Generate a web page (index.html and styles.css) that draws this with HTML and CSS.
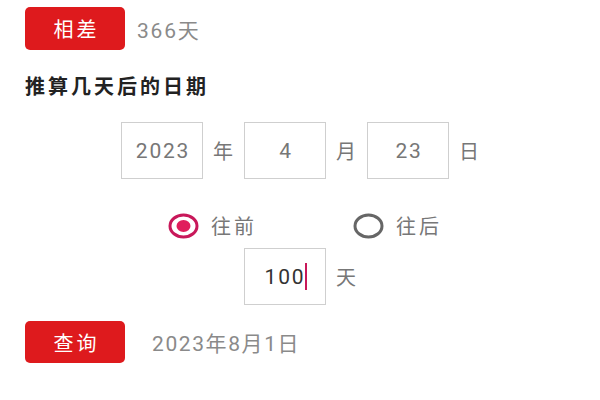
FILE: index.html
```html
<!DOCTYPE html>
<html lang="zh">
<head>
<meta charset="utf-8">
<title>日期计算</title>
<link rel="stylesheet" href="styles.css">
</head>
<body>
<div class="page">
  <div class="result-row top">
    <button class="btn">相差</button>
    <span class="result">366天</span>
  </div>
  <h2 class="heading">推算几天后的日期</h2>
  <div class="date-row">
    <div class="box">2023</div><span class="unit">年</span>
    <div class="box">4</div><span class="unit">月</span>
    <div class="box">23</div><span class="unit">日</span>
  </div>
  <div class="radio-row">
    <label class="radio">
      <svg class="radio-icon" viewBox="0 0 31 26" preserveAspectRatio="none" width="31" height="26">
        <ellipse cx="15.5" cy="13" rx="13.5" ry="11" fill="none" stroke="#c8185a" stroke-width="3"/>
        <ellipse cx="15.5" cy="13" rx="7" ry="6" fill="#e01d5c"/>
      </svg>
      <span>往前</span>
    </label>
    <label class="radio">
      <svg class="radio-icon" viewBox="0 0 31 26" preserveAspectRatio="none" width="31" height="26">
        <ellipse cx="15.5" cy="13" rx="13.5" ry="11" fill="none" stroke="#666" stroke-width="3"/>
      </svg>
      <span>往后</span>
    </label>
  </div>
  <div class="days-row">
    <div class="box days">100<span class="caret"></span></div><span class="unit">天</span>
  </div>
  <div class="result-row bottom">
    <button class="btn">查询</button>
    <span class="result">2023年8月1日</span>
  </div>
</div>
</body>
</html>
```

FILE: styles.css
```css
* { box-sizing: border-box; }
html, body {
  margin: 0;
  padding: 0;
  background: #fff;
}
body {
  font-family: "Roboto", "Noto Sans CJK SC", sans-serif;
  width: 600px;
  height: 400px;
  overflow: hidden;
}
.page {
  padding: 7px 0 0 25px;
  display: flex;
  flex-direction: column;
}
.result-row {
  display: flex;
  align-items: center;
}
.btn {
  width: 100px;
  height: 43px;
  border: none;
  border-radius: 5px;
  background: #de1a1d;
  color: #fff;
  font-family: inherit;
  font-size: 20px;
  letter-spacing: 3px;
  padding: 0 0 0 3px;
}
.result {
  color: #8a8a8a;
  font-size: 21px;
  letter-spacing: 1.8px;
}
.top .result { margin-left: 12px; }
.bottom { margin-top: 16px; }
.bottom .btn { height: 42px; }
.bottom .result { margin-left: 27px; letter-spacing: 1.6px; }
.heading {
  margin: 25px 0 0 0;
  font-size: 20px;
  font-weight: bold;
  color: #222;
  letter-spacing: 3px;
  line-height: 24px;
}
.date-row, .days-row {
  display: flex;
  align-items: center;
  justify-content: center;
  margin-left: -25px;
}
.date-row { margin-top: 23px; }
.box {
  width: 82px;
  height: 57px;
  border: 1px solid #cfcfcf;
  display: flex;
  align-items: center;
  justify-content: center;
  color: #777;
  font-size: 21px;
  letter-spacing: 1.8px;
  padding-left: 2px;
}
.unit {
  color: #777;
  font-size: 20px;
  margin: 0 11px 0 10px;
}
.unit:last-child { margin-right: 0; }
.radio-row {
  display: flex;
  margin-top: 32px;
  padding-left: 143px;
  gap: 96px;
}
.radio {
  display: flex;
  align-items: center;
  gap: 12px;
  color: #777;
  font-size: 20px;
  letter-spacing: 3px;
}
.radio-icon { display: block; }
.days-row { margin-top: 8px; }
.days { color: #333; }
.caret {
  display: inline-block;
  width: 2px;
  height: 27px;
  background: #c8185a;
  margin-left: 0;
}
```
